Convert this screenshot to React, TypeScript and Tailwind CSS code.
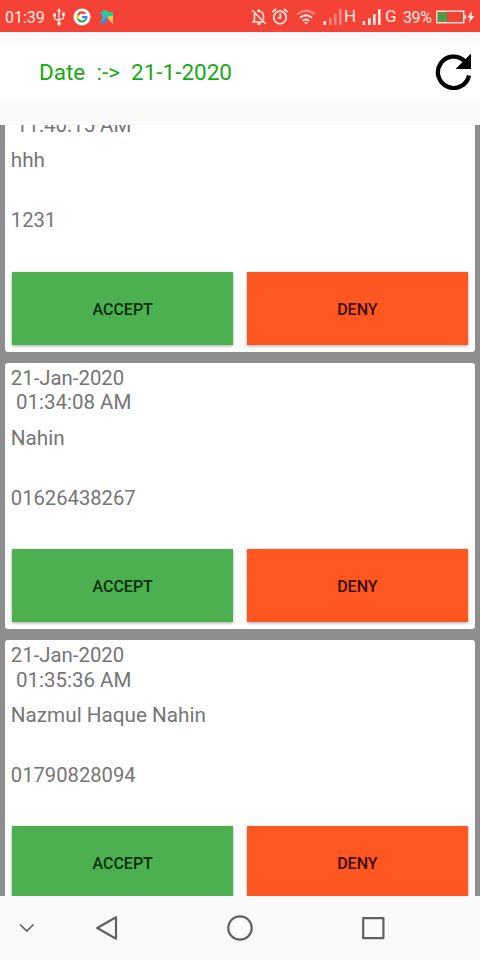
type Booking = {
  date: string;
  time: string;
  name: string;
  phone: string;
};

const bookings: Booking[] = [
  { date: '21-Jan-2020', time: '11:40:15 AM', name: 'hhh', phone: '1231' },
  { date: '21-Jan-2020', time: '01:34:08 AM', name: 'Nahin', phone: '01626438267' },
  { date: '21-Jan-2020', time: '01:35:36 AM', name: 'Nazmul Haque Nahin', phone: '01790828094' },
];

function SignalBars({ weak = false }: { weak?: boolean }) {
  return (
    <svg className="w-5 h-4" viewBox="0 0 20 16" fill="#ffe9e2">
      <rect x="0.5" y="12" width="2.6" height="4" />
      <rect x="6" y="9" width="2.6" height="7" opacity={weak ? 0.4 : 1} />
      <rect x="11" y="5" width="2.6" height="11" opacity={weak ? 0.4 : 1} />
      <rect x="16" y="0" width="2.6" height="16" opacity={weak ? 0.4 : 1} />
    </svg>
  );
}

function StatusBar() {
  return (
    <div className="h-8 shrink-0 flex items-center bg-[#f44336] text-[#ffe9e2] text-base pl-[5px] pt-0.5">
      <span className="w-[39px] whitespace-nowrap pt-px">01:39</span>

      {/* USB */}
      <svg className="ml-2 w-3.5 h-[18px]" viewBox="0 0 14 18" fill="none" stroke="#ffe9e2" strokeWidth="1.4">
        <path d="M7 3v12M2.5 7v3q0 1.5 4.5 2.5M11.5 6.5v3q0 1.5-4.5 2.5" />
        <path d="M7 0l2.3 3.5H4.7zM1 5.5h3v3H1zM10 4.5h3v3h-3z" fill="#ffe9e2" stroke="none" />
        <circle cx="7" cy="15.5" r="1.9" fill="#ffe9e2" stroke="none" />
      </svg>

      {/* Google */}
      <svg className="ml-[7px] w-[18px] h-[18px]" viewBox="0 0 18 18" fill="none" strokeWidth="2.2">
        <circle cx="9" cy="9" r="8.5" fill="#fff" />
        <path d="M12.3 5.7A4.5 4.5 0 0 0 5 7" stroke="#ea4335" />
        <path d="M5 7a4.5 4.5 0 0 0 0 4" stroke="#fbbc05" />
        <path d="M5 11a4.5 4.5 0 0 0 7.2 1.3" stroke="#34a853" />
        <path d="M12.2 12.3A4.5 4.5 0 0 0 13.4 9.2H9" stroke="#4285f4" />
      </svg>

      {/* Play services puzzle piece */}
      <svg className="ml-2 w-4 h-4" viewBox="0 0 16 16">
        <path d="M1 3h3.5l3 5L1 15l3-7z" fill="#16c6dc" />
        <path d="M4 3a2.200 2.200 0 1 1 4.500 0H14v4l-6 2z" fill="#22cf8c" />
        <path d="M1 15l7-7 1.500 4L4.500 15z" fill="#3e83e0" />
        <path d="M8 8l4 4-2 2.500-3-3z" fill="#e8505b" />
        <path d="M8 8l6-1.500V15l-3-3z" fill="#f2c14e" />
      </svg>

      {/* Muted bell */}
      <svg className="ml-[136px] w-4 h-[18px]" viewBox="0 0 16 18" fill="none" stroke="#ffe9e2" strokeWidth="1.5">
        <path d="M1 2l14 14M3.5 5.5V12L2 14h11M6 3.3Q12.5 2.5 12.5 8v3.5M8 1v2" />
        <path d="M6.5 16h3" strokeWidth="2" />
      </svg>

      {/* Alarm */}
      <svg className="ml-[5px] w-4 h-[18px]" viewBox="0 0 16 18" fill="none" stroke="#ffe9e2" strokeWidth="1.7">
        <circle cx="8" cy="9.5" r="6.3" />
        <path d="M8.3 5.5V10H5.5M0.5 4l3.5-3M15.5 4L12 1" />
      </svg>

      {/* Wifi */}
      <svg className="ml-2 w-5 h-4" viewBox="0 0 20 16" fill="none" stroke="#ffe9e2" strokeWidth="1.9">
        <path d="M1 5.5Q10-2 19 5.5" opacity="0.45" />
        <path d="M4 8.8Q10 3.5 16 8.8" />
        <path d="M6.8 11.8Q10 9 13.2 11.8" />
        <path d="M8 13.3h4l-2 2.2z" fill="#ffe9e2" stroke="none" />
      </svg>

      <div className="ml-[7px] flex items-center">
        <SignalBars weak />
        <span className="w-[13px] ml-px text-[17px]">H</span>
      </div>
      <div className="ml-[5px] flex items-center">
        <SignalBars />
        <span className="w-[13px] ml-[3px] text-[17px]">G</span>
      </div>
      <span className="ml-[5px] w-[30px] text-base tracking-tight pt-px">39%</span>

      {/* Battery */}
      <svg className="ml-[3px] w-10 h-4" viewBox="0 0 40 16">
        <rect x="0.7" y="2.2" width="27" height="11.5" fill="none" stroke="#ffe9e2" strokeWidth="1.4" />
        <rect x="2" y="3.5" width="9" height="9" fill="#43a047" />
        <rect x="28.5" y="6" width="1.5" height="4" fill="#ffe9e2" />
        <path d="M36 2L31 8.8h3l-1 5 5.500-6.800h-3z" fill="#ffe9e2" />
      </svg>
    </div>
  );
}

function Header() {
  return (
    <header className="mt-3 mb-[27px] h-[54px] shrink-0 flex items-center justify-between bg-white pl-[39px] pr-[8px]">
      <h1 className="whitespace-pre text-[22.5px] text-[#14ab14] pt-1">{'Date  :->  21-1-2020'}</h1>
      <button aria-label="Refresh">
        <svg className="w-[37px] h-[37px]" viewBox="0 0 37 37" fill="none">
          <path d="M34 22.5A15.7 15.7 0 1 1 29.5 8" stroke="#000" strokeWidth="4.3" />
          <path d="M36 0.5v15.5H20.5z" fill="#000" />
        </svg>
      </button>
    </header>
  );
}

function BookingCard({ booking }: { booking: Booking }) {
  return (
    <article className="h-[266.66px] shrink-0 rounded-[3px] bg-white px-[5.5px] pt-[3px] text-[20.35px] leading-[24.7px] text-[#757575]">
      <p>{booking.date}</p>
      <p className="whitespace-pre text-[20.5px]"> {booking.time}</p>
      <p className="mt-[10.6px] text-[20.7px]">{booking.name}</p>
      <p className="mt-[35.2px] text-[20.2px]">{booking.phone}</p>
      <div className="mx-[1.17px] mt-[38.7px] flex gap-[13.33px] text-base font-medium">
        <button className="h-[73.5px] flex-1 pt-[3px] bg-[#4caf50] text-[#07300a] shadow-[0_1px_3px_rgba(0,0,0,0.35)]">ACCEPT</button>
        <button className="h-[73.5px] flex-1 pt-[3px] bg-[#ff5722] text-[#3a0d04] shadow-[0_1px_3px_rgba(0,0,0,0.35)]">DENY</button>
      </div>
    </article>
  );
}

function NavBar() {
  return (
    <nav className="h-16 shrink-0 flex items-center bg-[#fafafa] pl-[19px]">
      <svg className="w-4 h-4" viewBox="0 0 16 16" fill="none" stroke="#616161" strokeWidth="1.7">
        <path d="M1 4.5l6.8 6.5 6.7-6.5" />
      </svg>
      <svg className="ml-[60px] w-6 h-7" viewBox="0 0 24 28" fill="none" stroke="#616161" strokeWidth="2.2" strokeLinejoin="round">
        <path d="M21 3.2v21.6L2.2 14z" />
      </svg>
      <svg className="ml-[107px] w-7 h-7" viewBox="0 0 28 28" fill="none" stroke="#616161" strokeWidth="2.2">
        <circle cx="14" cy="14" r="11.7" />
      </svg>
      <svg className="ml-[107px] w-6 h-6" viewBox="0 0 24 24" fill="none" stroke="#616161" strokeWidth="2.2" strokeLinejoin="round">
        <rect x="2.2" y="2.2" width="20.2" height="20" />
      </svg>
    </nav>
  );
}

export default function App() {
  return (
    <div className="w-[480px] h-[960px] flex flex-col overflow-hidden bg-[#fafafa] font-['Roboto',sans-serif]">
      <StatusBar />
      <Header />
      <main className="flex-1 min-h-0 overflow-hidden bg-[#8d8d8d] px-[5.33px]">
        {/* list is scrolled part of the way into the first card */}
        <div className="-mt-[39.7px] flex flex-col gap-[10.67px]">
          {bookings.map((booking) => (
            <BookingCard key={booking.time} booking={booking} />
          ))}
        </div>
      </main>
      <NavBar />
    </div>
  );
}
